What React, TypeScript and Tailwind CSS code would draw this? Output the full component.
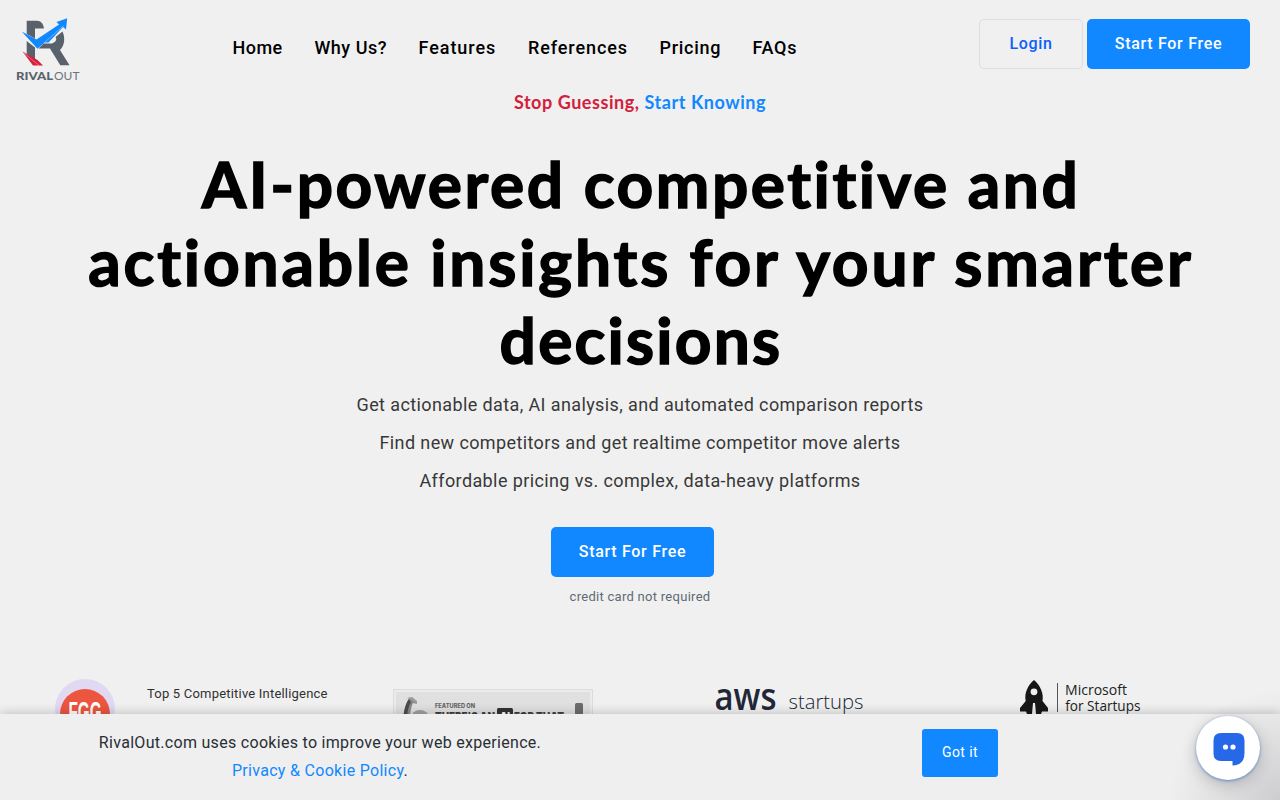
const NAV = [
  { label: "Home", cls: "w-[82px] tracking-[0.45px]" },
  { label: "Why Us?", cls: "w-[104px] tracking-[0.5px]" },
  { label: "Features", cls: "w-[109.5px] tracking-[0.95px]" },
  { label: "References", cls: "w-[131.5px] tracking-[0.9px]" },
  { label: "Pricing", cls: "w-[93px] tracking-[0.7px]" },
  { label: "FAQs", cls: "w-[48px] tracking-[0.7px]" },
];

function Logo() {
  return (
    <svg className="h-[66px] w-[66px]" viewBox="15 17 66 66" aria-label="RivalOut">
      <g fill="#59626b">
        <path d="M26.700 20.800H37C41 20.800 43.500 24 44 28.600H35V38.500L26.700 34Z" />
        <path d="M26.700 41L35 47.500V61.500L26.700 54Z" />
        <path d="M62.500 31.500C65.500 38 64.500 46 60 50L69.500 65.300H60.300L51.500 51L50 48.600H38.500L43.500 43.500H52C56.500 42 57 38.500 55.500 37Z" />
      </g>
      <path d="M21.700 31.500L36.500 39.600L59 24.500L56.500 22L67.200 18.200L66 29.600L63 27L48.500 42.500L44.500 42.500L37.500 48.800Z" fill="#1288ff" />
      <path d="M45 42L63.500 25.800" stroke="#f0f0f0" strokeWidth=".4" />
      <path d="M22.500 51.500L37.500 60L43 65.500H33Z" fill="#d71e3b" />
      <path d="M24 53L39 65.500" stroke="#f0f0f0" strokeWidth=".4" />
      <text x="16" y="79.800" fontSize="11.500" fontWeight="900" fill="#59626b" fontFamily="Lato, sans-serif" textLength="37" lengthAdjust="spacingAndGlyphs">RIVAL</text>
      <text x="54" y="79.800" fontSize="11.500" fontWeight="400" fill="#6b737b" fontFamily="Lato, sans-serif" textLength="25.500" lengthAdjust="spacingAndGlyphs">OUT</text>
    </svg>
  );
}

function RankBadge() {
  return (
    <svg className="h-[60px] w-[60px]" viewBox="0 0 60 60">
      <circle cx="30" cy="30" r="30" fill="#e1d8f2" />
      <circle cx="30" cy="35" r="25" fill="#ec563f" />
      <text x="13.500" y="42" fontSize="28" fontWeight="700" fill="#fff" fontFamily="Liberation Sans, sans-serif" textLength="33" lengthAdjust="spacingAndGlyphs">FGG</text>
    </svg>
  );
}

function FeaturedBadge() {
  return (
    <svg className="h-[43px] w-[200px]" viewBox="0 0 200 43">
      <rect x=".5" y=".5" width="199" height="42" fill="#ebebeb" stroke="#dcdcdc" />
      <rect x="3" y="3" width="194" height="37" fill="#e0e0e0" />
      <path d="M10 30C11 21 13 13 17 9L22 11L24 15L20 14C18 18 17 23 17 30Z" fill="#888" />
      <path d="M10 30C11 21 13 13 16 10L18 13C15 18 14 24 14 30Z" fill="#4c4c4c" />
      <path d="M14 9L19 8L24 12V15L20 12Z" fill="#9b9b9b" />
      <ellipse cx="27" cy="29" rx="9" ry="8" fill="#a0a0a0" />
      <text x="42" y="18.500" fontSize="6" fontWeight="800" fill="#666" fontFamily="Inter, sans-serif" textLength="40" lengthAdjust="spacingAndGlyphs">FEATURED ON</text>
      <text x="42" y="31" fontSize="11" fontWeight="900" fill="#3f3f3f" fontFamily="Inter, sans-serif" textLength="60" lengthAdjust="spacingAndGlyphs">THERE&apos;S AN</text>
      <rect x="104" y="19" width="16" height="15" rx="1.500" fill="#333" />
      <text x="107" y="31" fontSize="11" fontWeight="900" fill="#fff" fontFamily="Inter, sans-serif" textLength="10" lengthAdjust="spacingAndGlyphs">AI</text>
      <text x="121" y="31" fontSize="11" fontWeight="900" fill="#3f3f3f" fontFamily="Inter, sans-serif" textLength="50" lengthAdjust="spacingAndGlyphs">FOR THAT</text>
      <rect x="182" y="14" width="8" height="24" rx="1.500" fill="#6c6c6c" />
    </svg>
  );
}

function AwsLogo() {
  return (
    <svg className="h-[40px] w-[152px] overflow-visible" viewBox="714 680 152 40" fill="#202737">
      <text x="714.500" y="709.500" fontSize="37" fontWeight="600" fontFamily="Open Sans, sans-serif" textLength="62" lengthAdjust="spacingAndGlyphs">aws</text>
      <text x="788.500" y="708.500" fontSize="20.500" fontWeight="300" fontFamily="Open Sans, sans-serif" textLength="75" lengthAdjust="spacingAndGlyphs">startups</text>
    </svg>
  );
}

function MicrosoftLogo() {
  return (
    <svg className="h-[42px] w-[124px] overflow-visible" viewBox="1019 679 124 42" fill="#171717">
      <path fillRule="evenodd" d="M1034 680C1040 685 1044 693 1042.500 701L1048 708V711.500H1042L1041 714H1036L1035 703H1033L1032 714H1027L1026 711.500H1020V708L1025.700 701C1024 693 1028 685 1034 680ZM1034 688.400A3.400 3.400 0 1 0 1034 695.200A3.400 3.400 0 1 0 1034 688.400Z" />
      <rect x="1057" y="683" width="1" height="29" fill="#555" />
      <g fontFamily="Open Sans, sans-serif" fontSize="14.500" fill="#222">
        <text x="1065" y="694.800" textLength="62" lengthAdjust="spacingAndGlyphs">Microsoft</text>
        <text x="1065.300" y="711" textLength="75.200" lengthAdjust="spacingAndGlyphs">for Startups</text>
      </g>
    </svg>
  );
}

const BTN = "flex h-[50px] w-[163px] items-center justify-center rounded-[5px] bg-[#1188ff] text-[16px] font-medium tracking-[0.7px] text-white";

export default function App() {
  return (
    <div className="relative h-[800px] w-[1280px] overflow-hidden bg-[#f0f0f0] font-[Roboto,sans-serif] text-black">
      <header className="flex h-[88px] items-start pl-[15px]">
        <div className="w-[217.5px] pt-[17px]"><Logo /></div>
        <nav className="flex pt-[34px] text-[18px] leading-[28px] font-medium whitespace-nowrap">
          {NAV.map((n) => <a key={n.label} className={n.cls}>{n.label}</a>)}
        </nav>
        <div className="mr-[30px] ml-auto flex gap-1 pt-[19px]">
          <a className="flex h-[50px] w-[104px] items-center justify-center rounded-[5px] border border-[#dedede] font-medium tracking-[0.6px] text-[#0b5fff]">Login</a>
          <a className={BTN}>Start For Free</a>
        </div>
      </header>
      <main>
        <p className="text-center font-[Lato,sans-serif] text-[18px] leading-[28px] font-bold tracking-[0.55px] text-[#d3203c]">
          Stop Guessing, <span className="text-[#1188ff]">Start Knowing</span>
        </p>
        <h1 className="mt-[29px] pl-[2px] text-center font-[Lato,sans-serif] text-[64px] leading-[78px] font-bold whitespace-nowrap [-webkit-text-stroke:1.5px_#000]">
          <span className="block tracking-[2.55px]">AI-powered competitive and</span>
          <span className="block tracking-[2.85px]">actionable insights for your smarter</span>
          <span className="block tracking-[2.2px]">decisions</span>
        </h1>
        <div className="mt-[7px] text-center text-[18px] leading-[38px] tracking-[0.39px] text-[#383838]">
          <p>Get actionable data, AI analysis, and automated comparison reports</p>
          <p>Find new competitors and get realtime competitor move alerts</p>
          <p>Affordable pricing vs. complex, data-heavy platforms</p>
        </div>
        <div className="mt-[27px] flex justify-center pr-[15px]"><a className={BTN}>Start For Free</a></div>
        <p className="mt-2 text-center text-[13px] leading-[24px] tracking-[0.28px] text-[#606a75]">credit card not required</p>
        <section className="mt-[70px] flex items-start pl-[55px]">
          <RankBadge />
          <p className="ml-[32px] w-[246px] pt-1 text-[13px] leading-[22px] tracking-[0.2px] text-[#303030]">Top 5 Competitive Intelligence</p>
          <div className="w-[321px] pt-[10px]"><FeaturedBadge /></div>
          <div className="w-[305px] pt-px"><AwsLogo /></div>
          <MicrosoftLogo />
        </section>
      </main>
      <aside className="absolute inset-x-0 bottom-0 flex h-[86px] bg-[#efefef] shadow-[0_-1px_10px_rgba(0,0,0,0.2)]">
        <p className="w-[640px] pt-[15px] text-center text-[16px] leading-[28px] tracking-[0.3px] text-[#282e34]">
          RivalOut.com uses cookies to improve your web experience.<br />
          <a className="text-[#1188ff]">Privacy &amp; Cookie Policy</a>.
        </p>
        <div className="flex w-[640px] justify-center pt-[15px]">
          <button className="h-[48px] w-[76px] rounded-[3px] bg-[#1188ff] pb-0.5 text-[14px] tracking-[0.4px] text-white">Got it</button>
        </div>
      </aside>
      <div className="absolute right-0 bottom-0 h-[120px] w-[120px] bg-[radial-gradient(circle_at_bottom_right,rgba(70,70,85,0.2),rgba(70,70,85,0)_110px)]" />
      <div className="absolute right-[20px] bottom-[20px] flex h-[64px] w-[64px] items-center justify-center rounded-full bg-white shadow-[0_1px_3px_rgba(32,102,210,0.6),0_4px_16px_rgba(0,0,0,0.2)]">
        <svg className="mt-0.5 ml-px h-[34px] w-[32px]" viewBox="0 0 32 34">
          <path d="M8 1H24Q31.500 1 31.500 8.500V21Q31.500 33 19.500 33.500V29H8Q.5 29 .5 21.500V8.500Q.5 1 8 1Z" fill="#2668e8" />
          <circle cx="12.500" cy="15" r="2.600" fill="#fff" />
          <circle cx="20" cy="15" r="2.600" fill="#fff" />
        </svg>
      </div>
    </div>
  );
}
